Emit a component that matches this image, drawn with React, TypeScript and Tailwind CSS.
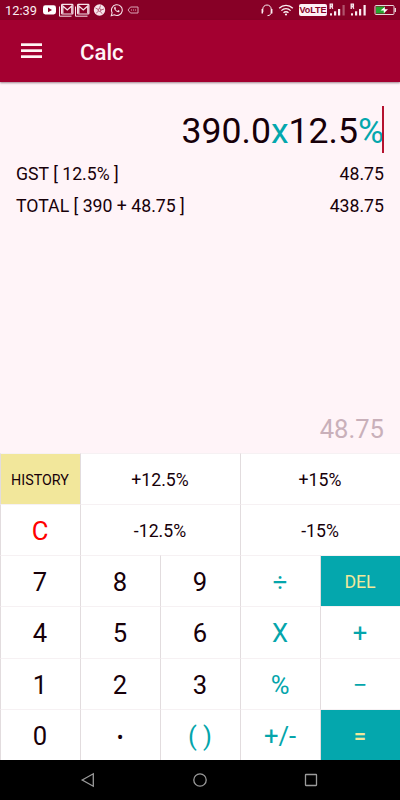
import React from "react";
import { clsx } from "clsx";

type Key = {
  label: string;
  className?: string;
};

// Keypad rows, laid out on a five column grid
const keys: Key[] = [
  { label: "HISTORY", className: "bg-[#f2e79b] text-[14.3px]" },
  { label: "+12.5%", className: "col-span-2 text-[17.7px]" },
  { label: "+15%", className: "col-span-2 text-[17.7px]" },
  { label: "C", className: "text-[#ff0000] text-[25.6px]" },
  { label: "-12.5%", className: "col-span-2 text-[17.7px]" },
  { label: "-15%", className: "col-span-2 text-[17.7px]" },
  { label: "7", className: "text-[25.6px]" },
  { label: "8", className: "text-[25.6px]" },
  { label: "9", className: "text-[25.6px]" },
  { label: "÷", className: "text-[#04a5ab] text-[25.6px]" },
  { label: "DEL", className: "bg-[#04a7ad] text-[#f2e79b] text-[17.7px]" },
  { label: "4", className: "text-[25.6px]" },
  { label: "5", className: "text-[25.6px]" },
  { label: "6", className: "text-[25.6px]" },
  { label: "X", className: "text-[#04a5ab] text-[25.6px]" },
  { label: "+", className: "text-[#04a5ab] text-[25.6px]" },
  { label: "1", className: "text-[25.6px]" },
  { label: "2", className: "text-[25.6px]" },
  { label: "3", className: "text-[25.6px]" },
  { label: "%", className: "text-[#04a5ab] text-[25.6px]" },
  { label: "−", className: "text-[#04a5ab] text-[25.6px]" },
  { label: "0", className: "text-[25.6px]" },
  { label: "•", className: "text-[20px]" },
  { label: "( )", className: "text-[#04a5ab] text-[25.6px]" },
  { label: "+/-", className: "text-[#04a5ab] text-[25.6px]" },
  { label: "=", className: "bg-[#04a7ad] text-[#f2e79b] text-[22px] font-medium" },
];

function GmailIcon() {
  return (
    <svg width="16" height="14" viewBox="0 0 16 14" fill="none" stroke="#f6e3e9">
      <path d="M1.5 3.5v9.7h12" strokeWidth="1" />
      <rect x="3.6" y="1.4" width="11.3" height="9.6" rx="0.8" strokeWidth="1.2" />
      <path d="M4.8 10.5V3l4.5 4 4.5-4v7.5" strokeWidth="1.3" />
    </svg>
  );
}

function SignalIcon({ weak }: { weak?: boolean }) {
  return (
    <svg width="17" height="14" viewBox="0 0 17 14" fill="#fbeef2">
      <path d="M1.2 6V1.2h2.2v2H1.4M2.6 3.2l1.2 2.6" fill="none" stroke="#fbeef2" strokeWidth="1.3" />
      <rect x="1" y="10.3" width="2" height="2.2" />
      <rect x="5" y="8.3" width="2.2" height="4.2" />
      <rect x="9" y="6" width="2.2" height="6.5" />
      <rect x="13.5" y="2" width="2.2" height="10.5" opacity={weak ? 0.35 : 1} />
    </svg>
  );
}

function StatusBar() {
  return (
    <div className="flex h-5 shrink-0 items-center bg-[#870026] pl-[5px] pr-[3px] text-[#fbeef2]">
      <span className="w-[37px] pt-px text-[12.8px] leading-5">12:39</span>
      <svg width="15" height="14" viewBox="0 0 15 14">
        <rect x="1" y="2.3" width="13" height="9.2" rx="2.4" fill="#fff" />
        <path d="M6 4.6v4.6l4-2.3z" fill="#870026" />
      </svg>
      <div className="ml-[1px] flex">
        <GmailIcon />
        <GmailIcon />
      </div>
      <svg className="ml-[3px]" width="13" height="14" viewBox="0 0 13 14">
        <circle cx="6.5" cy="7" r="5.7" fill="#f6e3e9" />
        <g stroke="#870026" strokeWidth="0.7" fill="none" opacity="0.8">
          <circle cx="6.5" cy="7" r="1.4" />
          <path d="M6.5 5.5l1-3M8 7l3-1M7.3 8.3l1.7 2.4M5.5 8.2l-2.3 1.9M5.1 6.4L2.5 5" />
        </g>
      </svg>
      <svg className="ml-[4px]" width="13" height="14" viewBox="0 0 24 26">
        <path
          d="M2.3 23.5l1.6-5.6A10 10 0 1 1 7.7 21.8z"
          fill="none"
          stroke="#f6e3e9"
          strokeWidth="2"
        />
        <path
          d="M8.5 7.2c-1.6 1.2-1.3 3.8 1.4 6.7s5.9 4.2 7.4 2.2c.7-1 .5-1.6-.2-2l-1.9-.9-1.5 1.5c-1.7-.6-3-1.9-3.7-3.5l1.1-1.3-.9-2.2c-.4-.8-1.1-.9-1.7-.5z"
          fill="#f6e3e9"
        />
      </svg>
      <svg className="ml-[4px]" width="12" height="10" viewBox="0 0 12 10" fill="none" stroke="#d9a4b4">
        <path d="M1 5l2.5-3H11v6H3.5z" strokeWidth="1" />
        <path d="M4 5h1M6 5h1M8 5h1" strokeWidth="1.2" />
      </svg>

      <div className="ml-auto flex items-center">
        <svg width="14" height="14" viewBox="0 0 14 14" fill="none" stroke="#fbeef2">
          <path d="M2.8 9V6.2a4.2 4.2 0 0 1 8.4 0V9c0 2.2-1.2 3.6-3.7 3.6" strokeWidth="1" />
          <path d="M2.3 6v4.5M11.7 6v4.5" strokeWidth="1.5" />
        </svg>
        <svg className="ml-[4px]" width="16" height="14" viewBox="0 0 16 14" fill="none" stroke="#fbeef2">
          <path d="M1.2 5.2a9.5 9.5 0 0 1 13.6 0M3.4 7.6a6.3 6.3 0 0 1 9.2 0M5.5 9.8a3.5 3.5 0 0 1 5 0" strokeWidth="1.3" />
          <circle cx="8" cy="11.5" r="1.1" fill="#fbeef2" stroke="none" />
        </svg>
        <span className="ml-[5px] flex h-3 w-7 items-center justify-center rounded-[2px] bg-[#fdf1f5] font-[Liberation_Sans,sans-serif] text-[9px] font-bold leading-3 text-[#870026]">
          VoLTE
        </span>
        <div className="ml-[2px] flex gap-[4px]">
          <SignalIcon weak />
          <SignalIcon />
        </div>
        <svg className="ml-[7px]" width="23" height="12" viewBox="0 0 23 12">
          <rect x="1" y="1.5" width="19" height="9" rx="1" fill="#870026" stroke="#e9d5da" />
          <rect x="2" y="2.5" width="9" height="7" fill="#27a52e" />
          <rect x="20.5" y="4" width="1.5" height="4" fill="#e9d5da" />
          <path d="M6.5 6.5L10.8 3v2.3h3.2L9.8 9.2V6.5z" fill="#fff" />
        </svg>
      </div>
    </div>
  );
}

function Header() {
  return (
    <header className="z-10 flex h-[62px] shrink-0 items-center bg-[#a30030] pl-[21px] shadow-[0_1px_2px_rgba(60,20,35,0.5)]">
      <button className="mb-px flex w-[21px] flex-col gap-[3px]" aria-label="Open menu">
        <span className="h-[3px] w-full border-t border-t-[#e6adbc] bg-[#fff5f3]" />
        <span className="h-[3px] w-full border-t border-t-[#e6adbc] bg-[#fff5f3]" />
        <span className="h-[3px] w-full border-t border-t-[#e6adbc] bg-[#fff5f3]" />
      </button>
      <h1 className="ml-[38px] pt-[2px] text-[22.2px] font-medium leading-7 text-[#fff5f8]">Calc</h1>
    </header>
  );
}

function Display() {
  return (
    <main className="flex flex-1 flex-col bg-[#fff4f8] px-4 pt-6">
      <div className="flex h-12 items-center justify-end text-[35.6px] leading-[48px]">
        <span className="pt-[2px]">390.0</span>
        <span className="pt-[2px] text-[#04a7ad]">x</span>
        <span className="pt-[2px]">12.5</span>
        <span className="pt-[2px] text-[#04a7ad]">%</span>
        <span className="-ml-[2px] mb-px h-[47px] w-[2px] bg-[#b5122f]" />
      </div>
      <div className="mt-1 flex h-8 items-center justify-between text-[17.7px]">
        <span>GST [ 12.5% ]</span>
        <span>48.75</span>
      </div>
      <div className="flex h-8 items-center justify-between text-[17.7px]">
        <span>TOTAL [ 390 + 48.75 ]</span>
        <span>438.75</span>
      </div>
      <div className="mb-[7px] mt-auto text-right text-[25.6px] leading-[34px] text-[#c9b0ba]">48.75</div>
    </main>
  );
}

function Keypad() {
  return (
    <div className="grid shrink-0 grid-cols-5 grid-rows-[51px_51px_51px_52px_51px_51px] bg-white">
      {keys.map((key) => (
        <button
          key={key.label}
          className={clsx(
            "flex items-center justify-center border-l border-t border-l-[#e2dcde] border-t-[#f6f1f3] pr-px pt-[3px] leading-none",
            key.className
          )}
        >
          {key.label}
        </button>
      ))}
    </div>
  );
}

function NavBar() {
  return (
    <nav className="flex h-10 shrink-0 items-center justify-between bg-black pl-[80px] pr-[81px]">
      <svg width="16" height="16" viewBox="0 0 16 16" fill="none" stroke="#9b9b9b" strokeWidth="1.3">
        <path d="M2.2 8L13.3 1.8v12.4z" />
      </svg>
      <svg width="16" height="16" viewBox="0 0 16 16" fill="none" stroke="#9b9b9b" strokeWidth="1.3">
        <circle cx="8" cy="8" r="6.2" />
      </svg>
      <svg width="16" height="16" viewBox="0 0 16 16" fill="none" stroke="#9b9b9b" strokeWidth="1.3">
        <rect x="2.5" y="2.5" width="11" height="11" rx="0.5" />
      </svg>
    </nav>
  );
}

export default function App() {
  return (
    <div className="flex h-[800px] w-[400px] flex-col overflow-hidden font-[Roboto,sans-serif] text-[#170009]">
      <StatusBar />
      <Header />
      <Display />
      <Keypad />
      <NavBar />
    </div>
  );
}
